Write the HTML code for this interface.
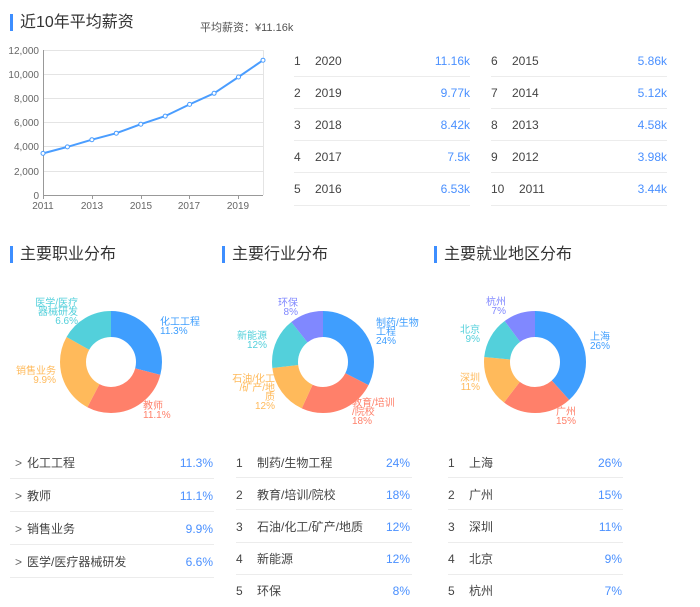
<!DOCTYPE html>
<html><head><meta charset="utf-8"><style>
*{margin:0;padding:0;box-sizing:border-box}
body{width:700px;height:607px;background:#fff;font-family:"Liberation Sans","Noto Sans CJK SC",sans-serif;color:#444;position:relative;overflow:hidden}
.a{position:absolute;white-space:nowrap}
.bar{position:absolute;width:3px;height:17px;background:#3d8eff}
.h{position:absolute;font-size:16px;color:#333;line-height:18px}
.t{font-size:12px;line-height:14px}
.v{color:#4a90ff}
.sep{position:absolute;height:1px;background:#ececec}
.l{position:absolute;font-size:10px;line-height:9px;white-space:nowrap}
</style></head><body>

<div class="bar" style="left:10px;top:14px"></div>
<div class="h" style="left:20px;top:14px">近10年平均薪资</div>
<div class="a" style="left:200px;top:19px;font-size:11px;color:#555">平均薪资：¥11.16k</div>

<svg class="a" style="left:0;top:0" width="280" height="215">
<g stroke="#e4e4e4" stroke-width="1">
<line x1="43" y1="50.5" x2="263" y2="50.5"/><line x1="43" y1="74.5" x2="263" y2="74.5"/>
<line x1="43" y1="98.5" x2="263" y2="98.5"/><line x1="43" y1="122.5" x2="263" y2="122.5"/>
<line x1="43" y1="146.5" x2="263" y2="146.5"/><line x1="43" y1="171.5" x2="263" y2="171.5"/>
<line x1="263.5" y1="50" x2="263.5" y2="195"/>
</g>
<line x1="43.5" y1="50" x2="43.5" y2="196" stroke="#999"/>
<line x1="43" y1="195.5" x2="263" y2="195.5" stroke="#999"/>
<g stroke="#999"><line x1="43.5" y1="195" x2="43.5" y2="199"/><line x1="92.5" y1="195" x2="92.5" y2="199"/><line x1="141.5" y1="195" x2="141.5" y2="199"/><line x1="189.5" y1="195" x2="189.5" y2="199"/><line x1="238.5" y1="195" x2="238.5" y2="199"/></g>
<g font-size="10" fill="#666" text-anchor="end" font-family="Liberation Sans">
<text x="39" y="54">12,000</text><text x="39" y="78">10,000</text><text x="39" y="102">8,000</text><text x="39" y="126">6,000</text><text x="39" y="150">4,000</text><text x="39" y="175">2,000</text><text x="39" y="199">0</text>
</g>
<g font-size="10" fill="#666" text-anchor="middle" font-family="Liberation Sans">
<text x="43" y="209">2011</text><text x="92" y="209">2013</text><text x="141" y="209">2015</text><text x="189" y="209">2017</text><text x="238" y="209">2019</text>
</g>
<polyline fill="none" stroke="#4a9dff" stroke-width="2" points="43,153.4 67.4,146.9 91.9,139.7 116.3,133.2 140.8,124.2 165.2,116.1 189.6,104.4 214.1,93.3 238.5,77 263,60.2"/>
<g fill="#fff" stroke="#4a9dff" stroke-width="1">
<circle cx="43" cy="153.4" r="2"/><circle cx="67.4" cy="146.9" r="2"/><circle cx="91.9" cy="139.7" r="2"/><circle cx="116.3" cy="133.2" r="2"/><circle cx="140.8" cy="124.2" r="2"/><circle cx="165.2" cy="116.1" r="2"/><circle cx="189.6" cy="104.4" r="2"/><circle cx="214.1" cy="93.3" r="2"/><circle cx="238.5" cy="77" r="2"/><circle cx="263" cy="60.2" r="2"/>
</g>
</svg>

<div class="sep" style="left:294px;top:76px;width:176px"></div>
<div class="sep" style="left:294px;top:108px;width:176px"></div>
<div class="sep" style="left:294px;top:140px;width:176px"></div>
<div class="sep" style="left:294px;top:172px;width:176px"></div>
<div class="sep" style="left:294px;top:205px;width:176px"></div>
<div class="sep" style="left:491px;top:76px;width:176px"></div>
<div class="sep" style="left:491px;top:108px;width:176px"></div>
<div class="sep" style="left:491px;top:140px;width:176px"></div>
<div class="sep" style="left:491px;top:172px;width:176px"></div>
<div class="sep" style="left:491px;top:205px;width:176px"></div>

<div class="a t" style="left:294px;top:54px">1</div><div class="a t" style="left:315px;top:54px">2020</div><div class="a t v" style="right:230px;top:54px">11.16k</div>
<div class="a t" style="left:294px;top:86px">2</div><div class="a t" style="left:315px;top:86px">2019</div><div class="a t v" style="right:230px;top:86px">9.77k</div>
<div class="a t" style="left:294px;top:118px">3</div><div class="a t" style="left:315px;top:118px">2018</div><div class="a t v" style="right:230px;top:118px">8.42k</div>
<div class="a t" style="left:294px;top:150px">4</div><div class="a t" style="left:315px;top:150px">2017</div><div class="a t v" style="right:230px;top:150px">7.5k</div>
<div class="a t" style="left:294px;top:182px">5</div><div class="a t" style="left:315px;top:182px">2016</div><div class="a t v" style="right:230px;top:182px">6.53k</div>

<div class="a t" style="left:491px;top:54px">6</div><div class="a t" style="left:512px;top:54px">2015</div><div class="a t v" style="right:33px;top:54px">5.86k</div>
<div class="a t" style="left:491px;top:86px">7</div><div class="a t" style="left:512px;top:86px">2014</div><div class="a t v" style="right:33px;top:86px">5.12k</div>
<div class="a t" style="left:491px;top:118px">8</div><div class="a t" style="left:512px;top:118px">2013</div><div class="a t v" style="right:33px;top:118px">4.58k</div>
<div class="a t" style="left:491px;top:150px">9</div><div class="a t" style="left:512px;top:150px">2012</div><div class="a t v" style="right:33px;top:150px">3.98k</div>
<div class="a t" style="left:491px;top:182px">10</div><div class="a t" style="left:519px;top:182px">2011</div><div class="a t v" style="right:33px;top:182px">3.44k</div>

<div class="bar" style="left:10px;top:246px"></div><div class="h" style="left:20px;top:246px">主要职业分布</div>
<div class="bar" style="left:222px;top:246px"></div><div class="h" style="left:232px;top:246px">主要行业分布</div>
<div class="bar" style="left:434px;top:246px"></div><div class="h" style="left:444px;top:246px">主要就业地区分布</div>

<svg class="a" style="left:0;top:0" width="700" height="440">
<g transform="translate(111,362) rotate(-90)" fill="none" stroke-width="26">
<circle r="38" stroke="#3f9efe" stroke-dasharray="69.36 238.76" stroke-dashoffset="0"/>
<circle r="38" stroke="#ff806a" stroke-dasharray="68.12 238.76" stroke-dashoffset="-69.36"/>
<circle r="38" stroke="#ffba5b" stroke-dasharray="60.77 238.76" stroke-dashoffset="-137.48"/>
<circle r="38" stroke="#53d0db" stroke-dasharray="40.51 238.76" stroke-dashoffset="-198.25"/>
</g>
<g transform="translate(323,362) rotate(-90)" fill="none" stroke-width="26">
<circle r="38" stroke="#3f9efe" stroke-dasharray="77.44 238.76" stroke-dashoffset="0"/>
<circle r="38" stroke="#ff806a" stroke-dasharray="58.07 238.76" stroke-dashoffset="-77.44"/>
<circle r="38" stroke="#ffba5b" stroke-dasharray="38.72 238.76" stroke-dashoffset="-135.51"/>
<circle r="38" stroke="#53d0db" stroke-dasharray="38.72 238.76" stroke-dashoffset="-174.23"/>
<circle r="38" stroke="#8088ff" stroke-dasharray="25.81 238.76" stroke-dashoffset="-212.95"/>
</g>
<g transform="translate(535,362) rotate(-90)" fill="none" stroke-width="26">
<circle r="38" stroke="#3f9efe" stroke-dasharray="91.3 238.76" stroke-dashoffset="0"/>
<circle r="38" stroke="#ff806a" stroke-dasharray="52.67 238.76" stroke-dashoffset="-91.3"/>
<circle r="38" stroke="#ffba5b" stroke-dasharray="38.63 238.76" stroke-dashoffset="-143.97"/>
<circle r="38" stroke="#53d0db" stroke-dasharray="31.6 238.76" stroke-dashoffset="-182.6"/>
<circle r="38" stroke="#8088ff" stroke-dasharray="24.58 238.76" stroke-dashoffset="-214.2"/>
</g>
</svg>

<div class="l" style="left:30px;top:299px;color:#53d0db;text-align:right;width:48px">医学/医疗<br>器械研发<br>6.6%</div>
<div class="l" style="left:160px;top:318px;color:#3f9efe">化工工程<br>11.3%</div>
<div class="l" style="left:16px;top:367px;color:#ffba5b;text-align:right;width:40px">销售业务<br>9.9%</div>
<div class="l" style="left:143px;top:402px;color:#ff806a">教师<br>11.1%</div>

<div class="l" style="left:272px;top:299px;color:#8088ff;text-align:right;width:26px">环保<br>8%</div>
<div class="l" style="left:236px;top:332px;color:#53d0db;text-align:right;width:31px">新能源<br>12%</div>
<div class="l" style="left:230px;top:375px;color:#ffba5b;text-align:right;width:45px">石油/化工<br>/矿产/地<br>质<br>12%</div>
<div class="l" style="left:376px;top:319px;color:#3f9efe">制药/生物<br>工程<br>24%</div>
<div class="l" style="left:352px;top:399px;color:#ff806a">教育/培训<br>/院校<br>18%</div>

<div class="l" style="left:484px;top:298px;color:#8088ff;text-align:right;width:22px">杭州<br>7%</div>
<div class="l" style="left:458px;top:326px;color:#53d0db;text-align:right;width:22px">北京<br>9%</div>
<div class="l" style="left:458px;top:374px;color:#ffba5b;text-align:right;width:22px">深圳<br>11%</div>
<div class="l" style="left:590px;top:333px;color:#3f9efe">上海<br>26%</div>
<div class="l" style="left:556px;top:408px;color:#ff806a">广州<br>15%</div>

<div class="sep" style="left:10px;top:478px;width:204px"></div>
<div class="sep" style="left:10px;top:511px;width:204px"></div>
<div class="sep" style="left:10px;top:544px;width:204px"></div>
<div class="sep" style="left:10px;top:577px;width:204px"></div>
<div class="a t" style="left:15px;top:456px;color:#666">&gt;</div><div class="a t" style="left:27px;top:456px">化工工程</div><div class="a t v" style="right:487px;top:456px">11.3%</div>
<div class="a t" style="left:15px;top:489px;color:#666">&gt;</div><div class="a t" style="left:27px;top:489px">教师</div><div class="a t v" style="right:487px;top:489px">11.1%</div>
<div class="a t" style="left:15px;top:522px;color:#666">&gt;</div><div class="a t" style="left:27px;top:522px">销售业务</div><div class="a t v" style="right:487px;top:522px">9.9%</div>
<div class="a t" style="left:15px;top:555px;color:#666">&gt;</div><div class="a t" style="left:27px;top:555px">医学/医疗器械研发</div><div class="a t v" style="right:487px;top:555px">6.6%</div>

<div class="sep" style="left:236px;top:477px;width:176px"></div>
<div class="sep" style="left:236px;top:509px;width:176px"></div>
<div class="sep" style="left:236px;top:542px;width:176px"></div>
<div class="sep" style="left:236px;top:574px;width:176px"></div>
<div class="a t" style="left:236px;top:456px">1</div><div class="a t" style="left:257px;top:456px">制药/生物工程</div><div class="a t v" style="right:290px;top:456px">24%</div>
<div class="a t" style="left:236px;top:488px">2</div><div class="a t" style="left:257px;top:488px">教育/培训/院校</div><div class="a t v" style="right:290px;top:488px">18%</div>
<div class="a t" style="left:236px;top:520px">3</div><div class="a t" style="left:257px;top:520px">石油/化工/矿产/地质</div><div class="a t v" style="right:290px;top:520px">12%</div>
<div class="a t" style="left:236px;top:552px">4</div><div class="a t" style="left:257px;top:552px">新能源</div><div class="a t v" style="right:290px;top:552px">12%</div>
<div class="a t" style="left:236px;top:584px">5</div><div class="a t" style="left:257px;top:584px">环保</div><div class="a t v" style="right:290px;top:584px">8%</div>

<div class="sep" style="left:448px;top:477px;width:175px"></div>
<div class="sep" style="left:448px;top:509px;width:175px"></div>
<div class="sep" style="left:448px;top:542px;width:175px"></div>
<div class="sep" style="left:448px;top:574px;width:175px"></div>
<div class="a t" style="left:448px;top:456px">1</div><div class="a t" style="left:469px;top:456px">上海</div><div class="a t v" style="right:78px;top:456px">26%</div>
<div class="a t" style="left:448px;top:488px">2</div><div class="a t" style="left:469px;top:488px">广州</div><div class="a t v" style="right:78px;top:488px">15%</div>
<div class="a t" style="left:448px;top:520px">3</div><div class="a t" style="left:469px;top:520px">深圳</div><div class="a t v" style="right:78px;top:520px">11%</div>
<div class="a t" style="left:448px;top:552px">4</div><div class="a t" style="left:469px;top:552px">北京</div><div class="a t v" style="right:78px;top:552px">9%</div>
<div class="a t" style="left:448px;top:584px">5</div><div class="a t" style="left:469px;top:584px">杭州</div><div class="a t v" style="right:78px;top:584px">7%</div>

</body></html>
